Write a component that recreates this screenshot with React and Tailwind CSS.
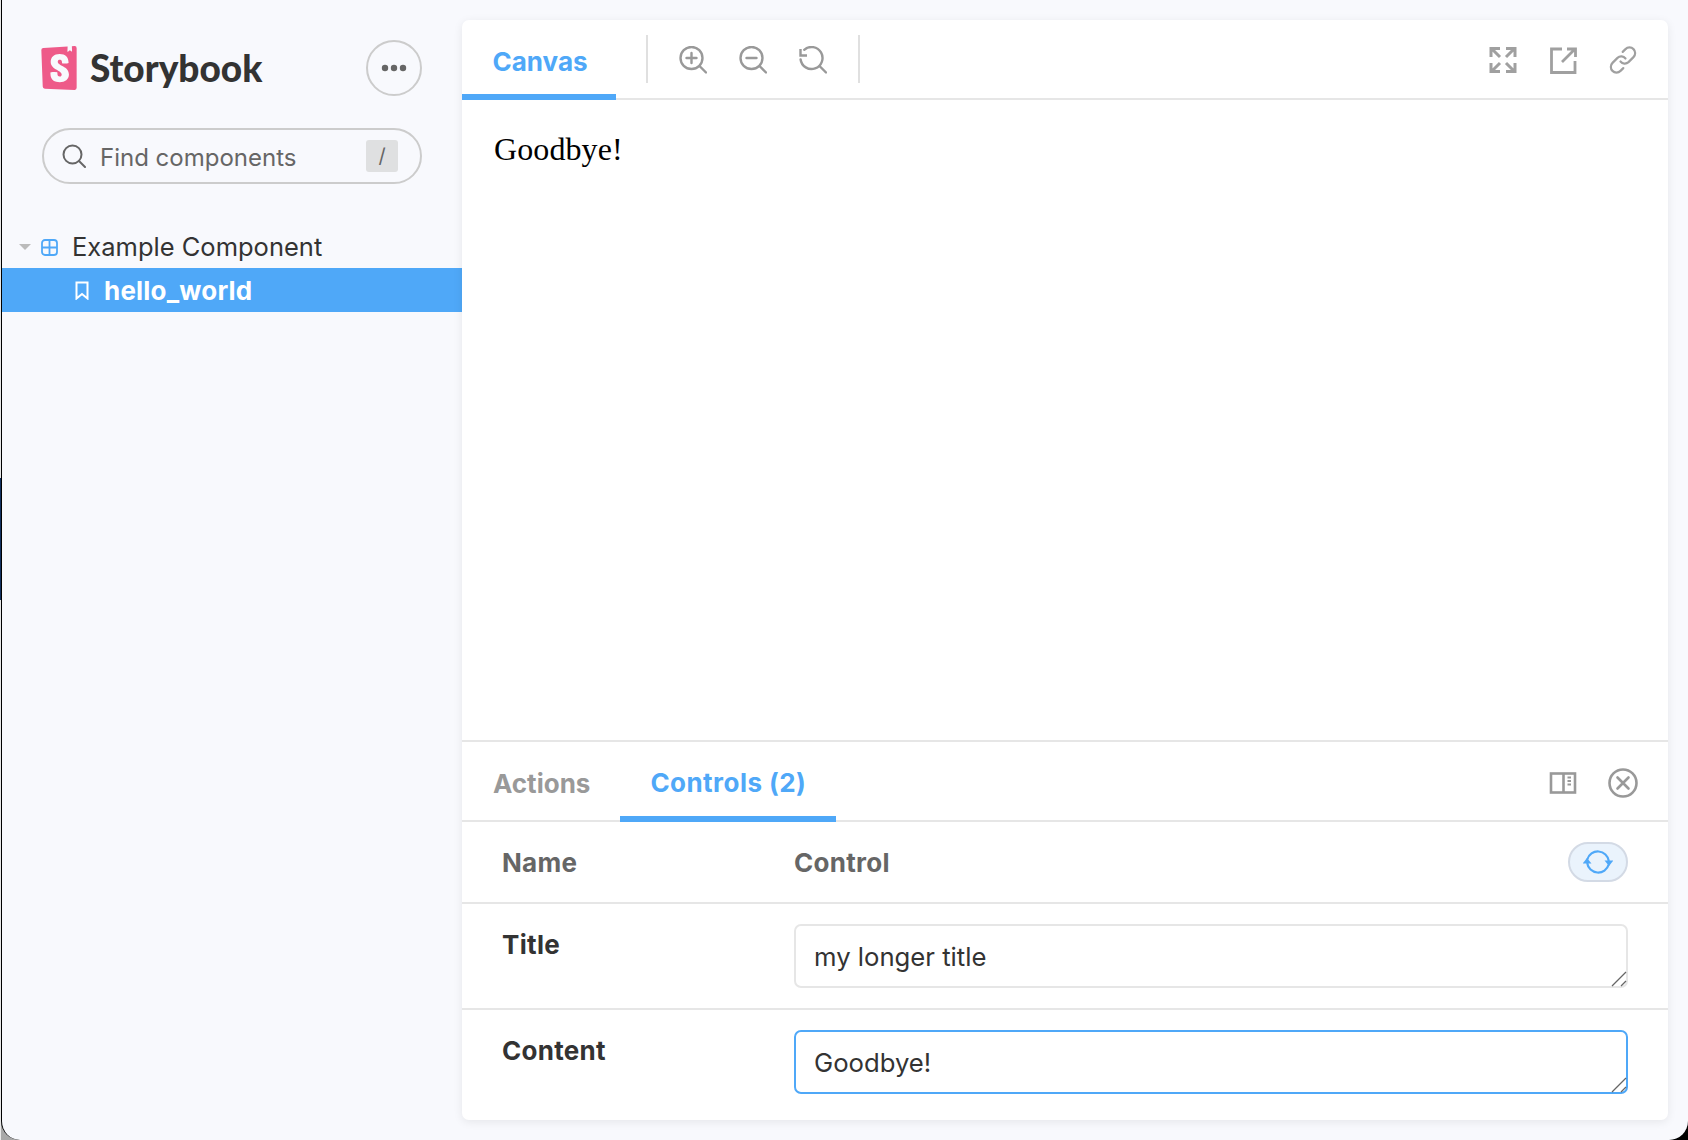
import React from 'react';
import { SiStorybook } from 'react-icons/si';

function IconButton({ children }) {
  return <div className="flex h-[28px] w-[28px] items-center justify-center">{children}</div>;
}

function Glass({ children }) {
  return (
    <svg className="shrink-0" width="28" height="28" viewBox="0 0 28 28" fill="none" stroke="#999" strokeWidth="2.400" strokeLinecap="round">
      {children}
    </svg>
  );
}

function ZoomInIcon() {
  return (
    <Glass>
      <circle cx="12.500" cy="12" r="11" />
      <path d="M20.500 20l6.500 6.500M12.500 7v10M7.500 12h10" />
    </Glass>
  );
}

function ZoomOutIcon() {
  return (
    <Glass>
      <circle cx="12.500" cy="12" r="11" />
      <path d="M20.500 20l6.500 6.500M7.500 12h10" />
    </Glass>
  );
}

function ZoomResetIcon() {
  return (
    <Glass>
      <path d="M5.200 3.800A11 11 0 1 1 1.600 13.500" />
      <path d="M20.500 20l6.500 6.500" />
      <path d="M1.500 3v6.500H8" strokeLinecap="butt" />
    </Glass>
  );
}

function ExpandIcon() {
  return (
    <svg className="shrink-0" width="28" height="28" viewBox="0 0 28 28" fill="none" stroke="#a0a0a0" strokeWidth="3">
      <path d="M2 11V2.500h9M2.500 2.500l8.500 8.500" />
      <path d="M26 11V2.500h-9M25.500 2.500L17 11" />
      <path d="M2 17v8.500h9M2.500 25.500L11 17" />
      <path d="M26 17v8.500h-9M25.500 25.500L17 17" />
    </svg>
  );
}

function ShareIcon() {
  return (
    <svg className="shrink-0" width="28" height="28" viewBox="0 0 28 28" fill="none" stroke="#a0a0a0" strokeWidth="2.800">
      <path d="M13 3H2.500v23.500H26V15" />
      <path d="M13 16L25 4M18 3h8.500v8" />
    </svg>
  );
}

function LinkIcon() {
  return (
    <svg className="shrink-0" width="28" height="28" viewBox="0 0 28 28" fill="none" stroke="#a0a0a0" strokeWidth="2.200" strokeLinecap="round">
      <path d="M11.500 15.500a5.500 5.500 0 0 0 8 .6l5-5a5.600 5.600 0 0 0-8-8l-2.800 2.800" />
      <path d="M16.500 12.500a5.500 5.500 0 0 0-8-.6l-5 5a5.600 5.600 0 0 0 8 8l2.800-2.800" />
    </svg>
  );
}

function PanelIcon() {
  return (
    <svg className="shrink-0" width="28" height="24" viewBox="0 0 28 24" fill="none" stroke="#999" strokeWidth="2.600">
      <rect x="2" y="2.500" width="24" height="19" />
      <path d="M14.500 2.500v19" />
      <path d="M18.500 6.500h3.500M18.500 10h3.500M18.500 13.500h3.500" strokeWidth="1.800" />
    </svg>
  );
}

function CloseIcon() {
  return (
    <svg className="shrink-0" width="30" height="30" viewBox="0 0 30 30" fill="none" stroke="#999" strokeWidth="2.600" strokeLinecap="round">
      <circle cx="15" cy="15" r="13.500" />
      <path d="M9.500 9.500l11 11M20.500 9.500l-11 11" />
    </svg>
  );
}

function SyncIcon() {
  return (
    <svg className="shrink-0" width="30" height="28" viewBox="0 0 30 28" fill="none" stroke="#4fa8f8" strokeWidth="2.200">
      <path d="M4.300 11.500A11 11 0 0 1 25.800 13" />
      <path d="M25.700 16.500A11 11 0 0 1 4.200 15" />
      <path d="M21.500 12.500h9l-4.500 5.500z" fill="#4fa8f8" stroke="none" />
      <path d="M-0.500 15.500h9l-4.500-5.500z" fill="#4fa8f8" stroke="none" />
    </svg>
  );
}

function ResizeHandle() {
  return (
    <svg className="pointer-events-none absolute bottom-[1px] right-[1px]" width="16" height="16" viewBox="0 0 16 16" fill="none" stroke="#666" strokeWidth="1.300">
      <path d="M1 15L15 1M10 15l5-5" />
    </svg>
  );
}

function ControlRow({ label, value, focused, last }) {
  return (
    <div className={`flex pl-[40px] pr-[40px] pt-[20px] ${last ? 'h-[110px]' : 'h-[106px] border-b-2 border-[#e6e6e6]'}`}>
      <div className="w-[292px] pt-[3px] text-[26px] leading-[36px] font-bold tracking-[0.3px] text-[#333]">{label}</div>
      <div className="relative h-[64px] flex-1">
        <textarea
          readOnly
          defaultValue={value}
          className={`block h-full w-full resize-none rounded-[7px] border-2 bg-white px-[18px] pb-[11px] pt-[13px] text-[25.700px] leading-[36px] text-[#333] outline-none ${focused ? 'border-[#4fa8f8]' : 'border-[#e6e6e6]'}`}
        />
        <ResizeHandle />
      </div>
    </div>
  );
}

export default function App() {
  return (
    <div className="flex h-[1140px] w-[1688px] overflow-hidden bg-[linear-gradient(to_right,#a8a8a8_50%,#000_50%)] font-['Inter',sans-serif]">
      {/* edge of the window behind */}
      <div className="flex w-[1px] shrink-0 flex-col bg-[#e8e8e8]">
        <div className="mt-[478px] h-[122px] bg-[#12305f]" />
      </div>
      <div className="flex h-full flex-1 rounded-b-[19px] border-l border-black bg-[#f8f9fd]">
        {/* Sidebar */}
        <aside className="w-[460px] shrink-0">
          <div className="flex h-[128px] items-start justify-between pl-[35px] pr-[40px] pt-[40px]">
            <div className="flex items-center pt-[6px]">
              <SiStorybook size={44} color="#ee5a89" />
              <span className="ml-[9px] font-['Lato',sans-serif] text-[37px] leading-[44px] font-black text-[#333]">Storybook</span>
            </div>
            <button className="flex h-[56px] w-[56px] items-center justify-center rounded-full border-2 border-[#ccc]">
              <svg width="26" height="8" viewBox="0 0 26 8" fill="#666">
                <circle cx="4" cy="4" r="3.200" />
                <circle cx="13" cy="4" r="3.200" />
                <circle cx="22" cy="4" r="3.200" />
              </svg>
            </button>
          </div>

          <div className="mx-[40px] flex h-[56px] items-center rounded-full border-2 border-[#ccc] pl-[18px] pr-[22px]">
            <svg width="24" height="24" viewBox="0 0 24 24" fill="none" stroke="#666" strokeWidth="2" strokeLinecap="round">
              <circle cx="10.500" cy="10.500" r="9" />
              <path d="M17 17l6 6" />
            </svg>
            <span className="ml-[14px] flex-1 pt-[4px] text-[24px] text-[#666]">Find components</span>
            <span className="flex h-[32px] w-[32px] items-center justify-center rounded-[3px] bg-[#dfe0e1] text-[20px] text-[#666]">/</span>
          </div>

          <div className="mt-[42px] flex h-[42px] items-center pl-[17px] text-[25.500px] text-[#333]">
            <svg width="12" height="6" viewBox="0 0 12 6" fill="#bbb"><path d="M0 0h12L6 6z" /></svg>
            <svg className="ml-[10px]" width="17" height="17" viewBox="0 0 17 17" fill="none" stroke="#4fa8f8" strokeWidth="1.800">
              <rect x="1" y="1" width="15" height="15" rx="3" />
              <path d="M8.500 1v15M1 8.500h15" />
            </svg>
            <span className="ml-[14px]">Example Component</span>
          </div>
          <div className="flex h-[44px] items-center bg-[#4fa8f8] pl-[73px] text-[26px] font-bold tracking-[0.2px] text-white">
            <svg width="14" height="19" viewBox="0 0 14 19" fill="none" stroke="#fff" strokeWidth="2">
              <path d="M1.500 1.500h11v16L7 13l-5.500 4.500z" />
            </svg>
            <span className="ml-[15px]">hello_world</span>
          </div>
        </aside>

        {/* Main card */}
        <main className="mb-[20px] mr-[20px] mt-[20px] flex flex-1 flex-col overflow-hidden rounded-[7px] bg-white shadow-[0_2px_10px_rgba(0,0,0,0.08)]">
          <div className="flex h-[80px] shrink-0 items-center border-b-2 border-[#e6e6e6] pr-[31px]">
            <div className="-mb-[2px] flex h-[80px] w-[154px] items-center justify-center border-b-[6px] border-[#4fa8f8] pl-[2px] pt-[9px] text-[26px] font-bold text-[#4fa8f8]">Canvas</div>
            <div className="ml-[30px] h-[48px] w-[2px] bg-[#e0e0e0]" />
            <div className="ml-[31px] flex gap-[32px] pt-[2px]">
              <IconButton><ZoomInIcon /></IconButton>
              <IconButton><ZoomOutIcon /></IconButton>
              <IconButton><ZoomResetIcon /></IconButton>
            </div>
            <div className="ml-[31px] h-[48px] w-[2px] bg-[#e0e0e0]" />
            <div className="ml-auto flex gap-[32px] pt-[2px]">
              <IconButton><ExpandIcon /></IconButton>
              <IconButton><ShareIcon /></IconButton>
              <IconButton><LinkIcon /></IconButton>
            </div>
          </div>

          <div className="flex-1 px-[32px] pb-[32px] pt-[30px] font-['Liberation_Serif',serif] text-[32px] leading-[38px] tracking-[0.1px] text-black">Goodbye!</div>

          <div className="flex h-[82px] shrink-0 items-center border-y-2 border-[#e6e6e6] pr-[31px] text-[26px] font-bold">
            <div className="ml-[31px] pt-[4px] text-[#999]">Actions</div>
            <div className="-mb-[2px] ml-[30px] flex h-[80px] w-[216px] items-center justify-center border-b-[6px] border-[#4fa8f8] pt-[6px] tracking-[0.45px] text-[#4fa8f8]">Controls (2)</div>
            <div className="ml-auto flex items-center gap-[32px] pt-[3px]">
              <IconButton><PanelIcon /></IconButton>
              <IconButton><CloseIcon /></IconButton>
            </div>
          </div>

          <div className="flex h-[82px] shrink-0 items-center border-b-2 border-[#e6e6e6] pl-[40px] pr-[40px] text-[26px] font-bold tracking-[0.3px] text-[#666]">
            <div className="w-[292px]">Name</div>
            <div>Control</div>
            <div className="ml-auto flex h-[40px] w-[60px] items-center justify-center rounded-full border-2 border-[#d3dae5] bg-[#eaf3fc]">
              <SyncIcon />
            </div>
          </div>

          <ControlRow label="Title" value="my longer title" />
          <ControlRow label="Content" value="Goodbye!" focused last />
        </main>
      </div>
    </div>
  );
}
